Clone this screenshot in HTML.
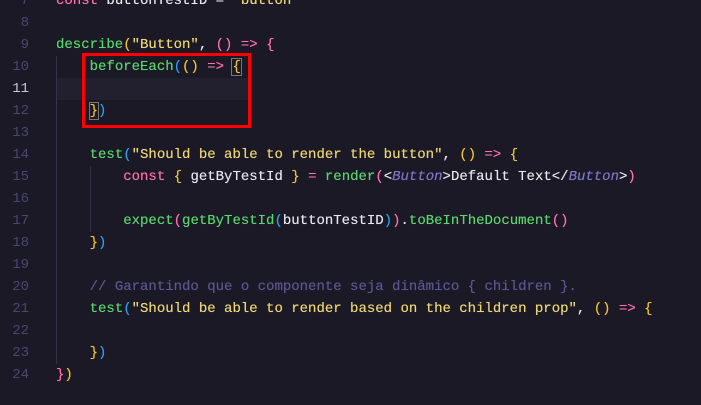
<!DOCTYPE html>
<html><head><style>
body{margin:0;width:701px;height:405px;background:#1b1925;overflow:hidden;font-family:"Liberation Mono",monospace;font-size:14px;position:relative}
.l{position:absolute;left:0;height:22px;line-height:22px;white-space:pre;width:701px}
.n{position:absolute;left:0;width:29px;text-align:right;color:#4a4670}
.c{position:absolute;left:56px;color:#e6e6ee;text-shadow:0 0 0.4px currentColor}
.g{color:#5ad46e}.y{color:#ecd675}.p{color:#ff6fb0}.b{color:#2f9cf0}.o{color:#f2c230}.w{color:#e6e6ee}.m{color:#5a5690}.i{color:#7a78c8;font-style:italic}.pk{color:#ff6fb0}
.vg{position:absolute;width:1px;background:#35334a}
</style></head><body>
<div style="position:absolute;left:57px;top:78px;width:192px;height:22px;background:#221f2f"></div>
<div class="vg" style="left:56px;top:56px;height:308px"></div>
<div class="vg" style="left:90px;top:166px;height:66px"></div>
<div class="l" style="top:-10px"><span class="n">7</span><span class="c"><span class="p">const</span> buttonTestID = <span class="y">"button"</span></span></div>
<div class="l" style="top:12px"><span class="n">8</span></div>
<div class="l" style="top:34px"><span class="n">9</span><span class="c"><span class="g">describe</span><span class="o">(</span><span class="y">"Button"</span>, <span class="p">()</span> <span class="p">=&gt;</span> <span class="p">{</span></span></div>
<div class="l" style="top:56px"><span class="n">10</span><span class="c">    <span class="g">beforeEach</span><span class="b">(</span><span class="o">()</span> <span class="p">=&gt;</span> <span class="o" style="outline:1px solid #777">{</span></span></div>
<div class="l" style="top:78px"><span class="n" style="color:#c8c6dc">11</span></div>
<div class="l" style="top:100px"><span class="n">12</span><span class="c">    <span class="o" style="outline:1px solid #777">}</span><span class="b">)</span></span></div>
<div class="l" style="top:122px"><span class="n">13</span></div>
<div class="l" style="top:144px"><span class="n">14</span><span class="c">    <span class="g">test</span><span class="b">(</span><span class="y">"Should be able to render the button"</span>, <span class="o">()</span> <span class="p">=&gt;</span> <span class="o">{</span></span></div>
<div class="l" style="top:166px"><span class="n">15</span><span class="c">        <span class="p">const</span> <span class="o">{</span> getByTestId <span class="o">}</span> <span class="p">=</span> <span class="g">render</span><span class="p">(</span>&lt;<span class="i">Button</span>&gt;Default Text&lt;/<span class="i">Button</span>&gt;<span class="p">)</span></span></div>
<div class="l" style="top:188px"><span class="n">16</span></div>
<div class="l" style="top:210px"><span class="n">17</span><span class="c">        <span class="g">expect</span><span class="p">(</span><span class="g">getByTestId</span><span class="b">(</span>buttonTestID<span class="b">)</span><span class="p">)</span>.<span class="g">toBeInTheDocument</span><span class="p">()</span></span></div>
<div class="l" style="top:232px"><span class="n">18</span><span class="c">    <span class="o">}</span><span class="b">)</span></span></div>
<div class="l" style="top:254px"><span class="n">19</span></div>
<div class="l" style="top:276px"><span class="n">20</span><span class="c">    <span class="m">// Garantindo que o componente seja dinâmico { children }.</span></span></div>
<div class="l" style="top:298px"><span class="n">21</span><span class="c">    <span class="g">test</span><span class="b">(</span><span class="y">"Should be able to render based on the children prop"</span>, <span class="o">()</span> <span class="p">=&gt;</span> <span class="o">{</span></span></div>
<div class="l" style="top:320px"><span class="n">22</span></div>
<div class="l" style="top:342px"><span class="n">23</span><span class="c">    <span class="o">}</span><span class="b">)</span></span></div>
<div class="l" style="top:364px"><span class="n">24</span><span class="c"><span class="p">}</span><span class="o">)</span></span></div>
<div style="position:absolute;left:82px;top:53px;width:163px;height:69px;border:3px solid #ff0000"></div>
</body></html>
